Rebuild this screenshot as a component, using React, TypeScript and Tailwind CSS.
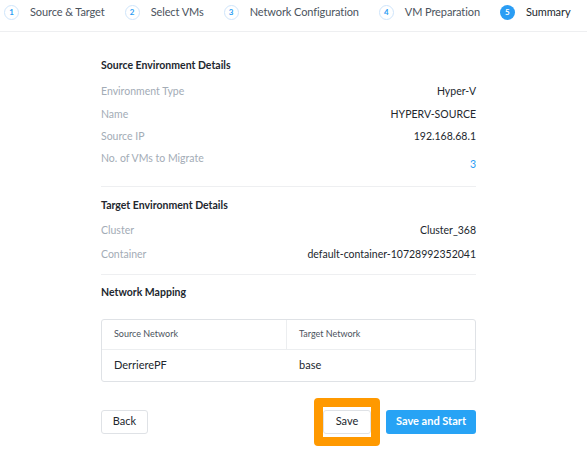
import type { ReactNode } from 'react';

const steps = [
  { n: 1, label: 'Source & Target' },
  { n: 2, label: 'Select VMs' },
  { n: 3, label: 'Network Configuration' },
  { n: 4, label: 'VM Preparation' },
  { n: 5, label: 'Summary', active: true },
];

function Row({ label, children, h = 'h-[22.4px]' }: { label: string; children: ReactNode; h?: string }) {
  return (
    <div className={`flex items-center justify-between ${h}`}>
      <span className="text-[#a3acb6]">{label}</span>
      {children}
    </div>
  );
}

export default function App() {
  return (
    <div className="w-[587px] h-[449px] bg-white overflow-hidden font-['Lato',sans-serif] text-[10.5px] text-[#22272e]">

      {/* ── Stepper ─────────────────────────────────────────────── */}
      <div className="flex items-center gap-[20px] pl-[4px] h-[32px] pb-[7px] border-b border-[#eeeff1] whitespace-nowrap">
        {steps.map((s) => (
          <div key={s.n} className="flex items-center gap-[11px] shrink-0">
            <span
              className={`w-[15px] h-[15px] rounded-full flex items-center justify-center text-[8px] font-bold ${
                s.active ? 'bg-[#2a9df4] text-white' : 'border border-[#cfe5fb] text-[#2a9df4]'
              }`}
            >
              {s.n}
            </span>
            <span className={`text-[11px] tracking-[-0.1px] ${s.active ? 'text-[#22272e]' : 'text-[#4b535d]'}`}>{s.label}</span>
          </div>
        ))}
      </div>

      {/* ── Content ─────────────────────────────────────────────── */}
      <div className="w-[375px] ml-[101px]">

        <div className="pt-[25px] pb-[15px] border-b border-[#eeeff1]">
          <div className="font-bold h-[16px] leading-[16px] mb-[8px]">Source Environment Details</div>
          <Row label="Environment Type"><span>Hyper-V</span></Row>
          <Row label="Name"><span>HYPERV-SOURCE</span></Row>
          <Row label="Source IP"><span>192.168.68.1</span></Row>
          <Row label="No. of VMs to Migrate"><span className="text-[#2a9df4] mt-[10px]">3</span></Row>
        </div>

        <div className="pt-[10px] pb-[7px] border-b border-[#eeeff1]">
          <div className="font-bold h-[16px] leading-[16px] mb-[6px]">Target Environment Details</div>
          <Row label="Cluster" h="h-[24px]"><span>Cluster_368</span></Row>
          <Row label="Container" h="h-[24px]"><span>default-container-10728992352041</span></Row>
        </div>

        <div className="pt-[9px]">
          <div className="font-bold h-[16px] leading-[16px]">Network Mapping</div>

          <div className="mt-[19px] border border-[#dfe2e6] rounded-[3px]">
            <div className="flex h-[30px] border-b border-[#eceef0] text-[9px] text-[#4b535d]">
              <div className="w-[185px] px-[12px] flex items-center border-r border-[#eceef0]">Source Network</div>
              <div className="flex-1 px-[12px] flex items-center">Target Network</div>
            </div>
            <div className="flex h-[31px] text-[11px]">
              <div className="w-[185px] px-[12px] flex items-center">DerrierePF</div>
              <div className="flex-1 px-[12px] flex items-center">base</div>
            </div>
          </div>
        </div>

        {/* ── Footer buttons ────────────────────────────────────── */}
        <div className="mt-[16px] flex items-center justify-between">
          <button type="button" className="h-[24px] w-[47px] border border-[#dfe2e6] rounded-[3px] bg-white text-[11px]">
            Back
          </button>
          <div className="flex items-center gap-[6px]">
            <span className="border-[9px] border-[#ff9900] rounded-[4px] py-[3px] bg-white flex">
              <button type="button" className="h-[24px] w-[48px] border border-[#dfe2e6] rounded-[3px] bg-white text-[11px]">
                Save
              </button>
            </span>
            <button type="button" className="h-[24px] w-[90px] rounded-[3px] bg-[#27a3f5] text-white font-bold text-[11px]">
              Save and Start
            </button>
          </div>
        </div>
      </div>
    </div>
  );
}
